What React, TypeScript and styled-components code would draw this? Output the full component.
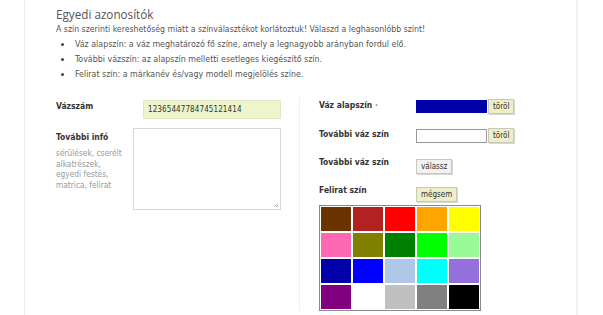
import React from "react";
import styled, { createGlobalStyle } from "styled-components";

const Global = createGlobalStyle`
  html, body { margin: 0; padding: 0; background: #fff; }
  body { font-family: "DejaVu Sans Condensed", "DejaVu Sans", sans-serif; color: #555; }
  * { box-sizing: border-box; }
`;

const Panel = styled.div`
  margin-left: 24px;
  width: 554px;
  min-height: 315px;
  border-left: 1px solid #eeeeee;
  border-right: 2px solid #f0f0f0;
  padding: 6px 0 0 31px;
`;

const Title = styled.h2`
  margin: 0;
  font-size: 11.7px;
  font-weight: normal;
  color: #555;
  line-height: 16px;
  font-family: "Open Sans", sans-serif;
`;

const Intro = styled.p`
  margin: 0;
  font-size: 8.7px;
  line-height: 15px;
  color: #555;
`;

const List = styled.ul`
  margin: 0;
  padding: 0;
  list-style: none;
`;

const Item = styled.li`
  position: relative;
  font-size: 8.8px;
  line-height: 15px;
  padding-left: 19px;
  &::before {
    content: "";
    position: absolute;
    left: 5px;
    top: 6px;
    width: 3px;
    height: 3px;
    border-radius: 50%;
    background: #444;
  }
`;

const Form = styled.div`
  display: grid;
  grid-template-columns: 243px 1fr;
  margin-top: 15px;
`;

const LeftCol = styled.div`
  display: flex;
  flex-direction: column;
  gap: 9px;
  padding-top: 3px;
`;

const RightCol = styled.div`
  border-left: 1px solid #f0f0f0;
  padding: 2px 0 0 19px;
  display: flex;
  flex-direction: column;
`;

const Row = styled.div<{ $h?: number }>`
  display: flex;
  align-items: flex-start;
  min-height: ${(p) => p.$h ?? 0}px;
`;

const Label = styled.div<{ $w: number }>`
  width: ${(p) => p.$w}px;
  flex-shrink: 0;
  font-size: 8.5px;
  font-weight: bold;
  color: #333;
  line-height: 12px;
`;

const LabelText = styled.div`
  margin-top: 3px;
`;

const Required = styled.span`
  color: #888;
  font-weight: bold;
`;

const Help = styled.div`
  font-size: 8.3px;
  font-weight: normal;
  color: #999;
  line-height: 10.7px;
  margin-top: 5px;
  width: 72px;
`;

const TextInput = styled.div`
  margin-left: 10px;
  width: 138px;
  height: 19px;
  background: #eef4cc;
  border: 1px solid #e2e6c8;
  font-size: 8px;
  color: #333;
  padding: 0 0 0 4px;
  display: flex;
  align-items: center;
  letter-spacing: 0.1px;
`;

const TextArea = styled.div`
  width: 148px;
  height: 82px;
  border: 1px solid #d8d8d8;
  background: #fff;
  position: relative;
  &::after {
    content: "";
    position: absolute;
    right: 2px;
    bottom: 2px;
    width: 4px;
    height: 4px;
    background: linear-gradient(135deg, transparent 50%, #bbb 50%, #bbb 60%, transparent 60%, transparent 75%, #bbb 75%);
  }
`;

const Swatch = styled.div<{ $c: string }>`
  width: 71px;
  height: ${(p) => (p.$c === "#fff" ? 14 : 13)}px;
  margin-top: 1px;
  background: ${(p) => p.$c};
  border: 1px solid ${(p) => (p.$c === "#fff" ? "#999" : p.$c)};
`;

const Btn = styled.button<{ $yellow?: boolean }>`
  font-family: "DejaVu Sans Condensed", "DejaVu Sans", sans-serif;
  font-size: 8px;
  color: #333;
  height: 15px;
  padding: 0 4px;
  margin: 0 0 0 1px;
  background: ${(p) => (p.$yellow ? "#eeeec8" : "#f2f2f2")};
  border: 1px solid #c8c8b8;
  box-shadow: 1px 1px 0 #d8d8d0;
  line-height: 13px;
  cursor: pointer;
`;

const SoloBtn = styled(Btn)`
  margin: 6px 0 0 0;
`;

const Grid = styled.div`
  display: grid;
  grid-template-columns: repeat(5, 30px);
  grid-auto-rows: 24px;
  gap: 2px;
  padding: 1px;
  border: 1px solid #8a8a8a;
  width: 162px;
  margin-top: 3px;
  background: #fff;
`;

const Cell = styled.div<{ $c: string }>`
  background: ${(p) => p.$c};
`;

const colors = [
  "#6b3300", "#b22222", "#ff0000", "#ffa500", "#ffff00",
  "#ff69b4", "#808000", "#008000", "#00ff00", "#98fb98",
  "#0000aa", "#0000ff", "#b0c8e8", "#00ffff", "#9370db",
  "#800080", "#ffffff", "#c0c0c0", "#808080", "#000000",
];

export default function App() {
  return (
    <>
      <Global />
      <Panel>
        <Title>Egyedi azonosítók</Title>
        <Intro>A szín szerinti kereshetőség miatt a színválasztékot korlátoztuk! Válaszd a leghasonlóbb színt!</Intro>
        <List>
          <Item>Váz alapszín: a váz meghatározó fő színe, amely a legnagyobb arányban fordul elő.</Item>
          <Item>További vázszín: az alapszín melletti esetleges kiegészítő szín.</Item>
          <Item>Felirat szín: a márkanév és/vagy modell megjelölés színe.</Item>
        </List>
        <Form>
          <LeftCol>
            <Row>
              <Label $w={77}>Vázszám</Label>
              <TextInput>12365447784745121414</TextInput>
            </Row>
            <Row>
              <Label $w={77}>
                <LabelText>További infó</LabelText>
                <Help>sérülések, cserélt alkatrészek, egyedi festés, matrica, felirat</Help>
              </Label>
              <TextArea />
            </Row>
          </LeftCol>
          <RightCol>
            <Row $h={29}>
              <Label $w={97}>Váz alapszín <Required>·</Required></Label>
              <Swatch $c="#0000a8" />
              <Btn $yellow>töröl</Btn>
            </Row>
            <Row $h={25}>
              <Label $w={97}>További váz szín</Label>
              <Swatch $c="#fff" />
              <Btn $yellow>töröl</Btn>
            </Row>
            <Row $h={28}>
              <Label $w={97}>
                <LabelText>További váz szín</LabelText>
              </Label>
              <SoloBtn>válassz</SoloBtn>
            </Row>
            <Row>
              <Label $w={97}>
                <LabelText>Felirat szín</LabelText>
              </Label>
              <SoloBtn $yellow>mégsem</SoloBtn>
            </Row>
            <Grid>
              {colors.map((c, i) => (
                <Cell key={i} $c={c} />
              ))}
            </Grid>
          </RightCol>
        </Form>
      </Panel>
    </>
  );
}
